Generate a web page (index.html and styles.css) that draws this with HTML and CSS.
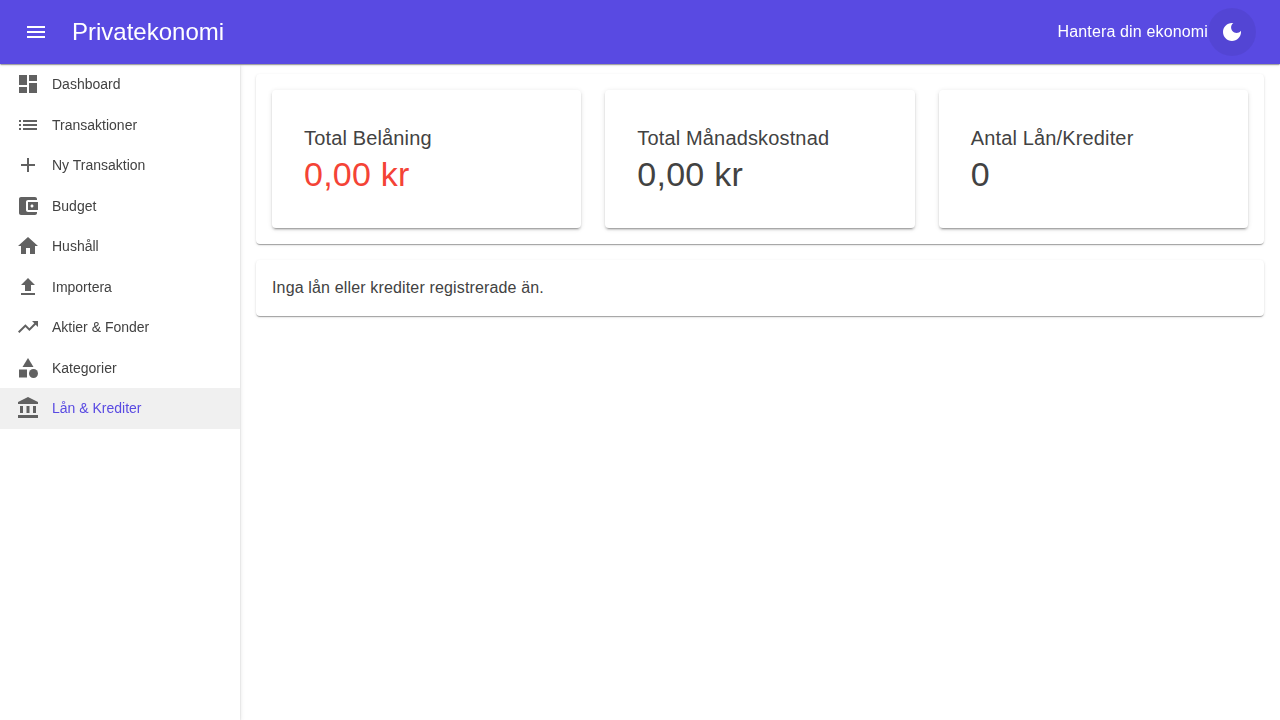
FILE: index.html
```html
<!DOCTYPE html>
<html lang="sv">
<head>
<meta charset="utf-8">
<title>Privatekonomi</title>
<link rel="stylesheet" href="styles.css">
</head>
<body>
<div class="layout">
  <header class="appbar">
    <button class="icon-button" aria-label="Meny"><svg class="icon" viewBox="0 0 24 24"><path d="M3 18h18v-2H3v2zm0-5h18v-2H3v2zm0-7v2h18V6H3z"/></svg></button>
    <h1 class="brand">Privatekonomi</h1>
    <span class="tagline">Hantera din ekonomi</span>
    <button class="icon-button theme-toggle" aria-label="Mörkt läge"><svg class="icon" viewBox="0 0 24 24"><path d="M12 3c-4.97 0-9 4.03-9 9s4.03 9 9 9 9-4.03 9-9c0-.46-.04-.92-.1-1.36-.98 1.37-2.58 2.26-4.4 2.26-2.98 0-5.4-2.42-5.4-5.4 0-1.81.89-3.42 2.26-4.4-.44-.06-.9-.1-1.36-.1z"/></svg></button>
  </header>
  <div class="body">
    <nav class="drawer">
      <a class="nav-link"><svg class="icon" viewBox="0 0 24 24"><path d="M3 13h8V3H3v10zm0 8h8v-6H3v6zm10 0h8V11h-8v10zm0-18v6h8V3h-8z"/></svg><span>Dashboard</span></a>
      <a class="nav-link"><svg class="icon" viewBox="0 0 24 24"><path d="M3 13h2v-2H3v2zm0 4h2v-2H3v2zm0-8h2V7H3v2zm4 4h14v-2H7v2zm0 4h14v-2H7v2zM7 7v2h14V7H7z"/></svg><span>Transaktioner</span></a>
      <a class="nav-link"><svg class="icon" viewBox="0 0 24 24"><path d="M19 13h-6v6h-2v-6H5v-2h6V5h2v6h6v2z"/></svg><span>Ny Transaktion</span></a>
      <a class="nav-link"><svg class="icon" viewBox="0 0 24 24"><path d="M21 18v1c0 1.1-.9 2-2 2H5c-1.11 0-2-.9-2-2V5c0-1.1.89-2 2-2h14c1.1 0 2 .9 2 2v1h-9c-1.11 0-2 .9-2 2v8c0 1.1.89 2 2 2h9zm-9-2h10V8H12v8zm4-2.5c-.83 0-1.5-.67-1.5-1.5s.67-1.5 1.5-1.5 1.5.67 1.5 1.5-.67 1.5-1.5 1.5z"/></svg><span>Budget</span></a>
      <a class="nav-link"><svg class="icon" viewBox="0 0 24 24"><path d="M10 20v-6h4v6h5v-8h3L12 3 2 12h3v8z"/></svg><span>Hushåll</span></a>
      <a class="nav-link"><svg class="icon" viewBox="0 0 24 24"><path d="M9 16h6v-6h4l-7-7-7 7h4zm-4 2h14v2H5z"/></svg><span>Importera</span></a>
      <a class="nav-link"><svg class="icon" viewBox="0 0 24 24"><path d="M16 6l2.29 2.29-4.88 4.88-4-4L2 16.59 3.41 18l6-6 4 4 6.3-6.29L22 12V6z"/></svg><span>Aktier &amp; Fonder</span></a>
      <a class="nav-link"><svg class="icon" viewBox="0 0 24 24"><path d="M12 2l-5.500 9h11z"/><circle cx="17.500" cy="17.500" r="4.500"/><path d="M3 13.500h8v8H3z"/></svg><span>Kategorier</span></a>
      <a class="nav-link active"><svg class="icon" viewBox="0 0 24 24"><path d="M4 10h3v7H4zM10.500 10h3v7h-3zM2 19h20v3H2zM17 10h3v7h-3zM12 1L2 6v2h20V6z"/></svg><span>Lån &amp; Krediter</span></a>
    </nav>
    <main class="content">
      <section class="paper summary">
        <div class="paper stat"><h2 class="stat-label">Total Belåning</h2><p class="stat-value negative">0,00 kr</p></div>
        <div class="paper stat"><h2 class="stat-label">Total Månadskostnad</h2><p class="stat-value">0,00 kr</p></div>
        <div class="paper stat"><h2 class="stat-label">Antal Lån/Krediter</h2><p class="stat-value">0</p></div>
      </section>
      <section class="paper notice">Inga lån eller krediter registrerade än.</section>
    </main>
  </div>
</div>
</body>
</html>
```
FILE: styles.css
```css
:root {
  --shadow-1: 0 2px 1px -1px rgba(0,0,0,.2), 0 1px 1px 0 rgba(0,0,0,.14), 0 1px 3px 0 rgba(0,0,0,.12);
  --shadow-2: 0 3px 1px -2px rgba(0,0,0,.2), 0 2px 2px 0 rgba(0,0,0,.14), 0 1px 5px 0 rgba(0,0,0,.12);
}
* { box-sizing: border-box; }
body {
  margin: 0;
  font: 400 16px/1.5 "Liberation Sans", Arial, sans-serif;
  letter-spacing: .15008px;
  color: #424242;
  background: #fff;
}
h1, h2, p { margin: 0; font-weight: 400; }
.layout { display: flex; flex-direction: column; height: 100vh; overflow: hidden; }
.icon { width: 24px; height: 24px; fill: currentColor; flex: none; display: block; }
.appbar {
  display: flex; align-items: center; flex: none;
  height: 64px; padding: 0 24px; z-index: 2;
  color: #fff; background: #594ae2;
  box-shadow: var(--shadow-1);
  will-change: transform;
}
.icon-button { width: 48px; height: 48px; padding: 12px; border: 0; border-radius: 50%; color: inherit; background: transparent; }
.appbar > .icon-button:first-child { margin-left: -12px; }
.brand { margin-left: 12px; font-size: 24px; line-height: 1.334; letter-spacing: 0; }
.tagline { margin-left: auto; }
.theme-toggle { background: rgba(0,0,0,.06); }
.body { display: flex; flex: 1; min-height: 0; }
.drawer {
  display: flex; flex-direction: column; flex: none; width: 240px;
  background: #fff;
  box-shadow: var(--shadow-2);
  will-change: transform;
}
.nav-link {
  display: flex; align-items: center; gap: 12px;
  padding: 8px 16px; height: 40.5px;
  font-size: 14px; line-height: 1.75; letter-spacing: 0;
}
.nav-link .icon { color: #616161; }
.active { color: #594ae2; background: rgba(0,0,0,.06); }
.content { flex: 1; padding: 10px 16px; }
.paper { border-radius: 4px; background: #fff; box-shadow: var(--shadow-1); }
.summary { display: grid; grid-template-columns: repeat(3, 1fr); gap: 24px; padding: 16px; height: 170px; }
.stat { padding: 32px; box-shadow: var(--shadow-2); }
.stat-label { font-size: 20px; line-height: 1.6; letter-spacing: .15px; }
.stat-value { font-size: 34px; line-height: 1.235; letter-spacing: .25px; }
.negative { color: #f44336; }
.notice { margin-top: 16px; padding: 16px; height: 56px; }
```
